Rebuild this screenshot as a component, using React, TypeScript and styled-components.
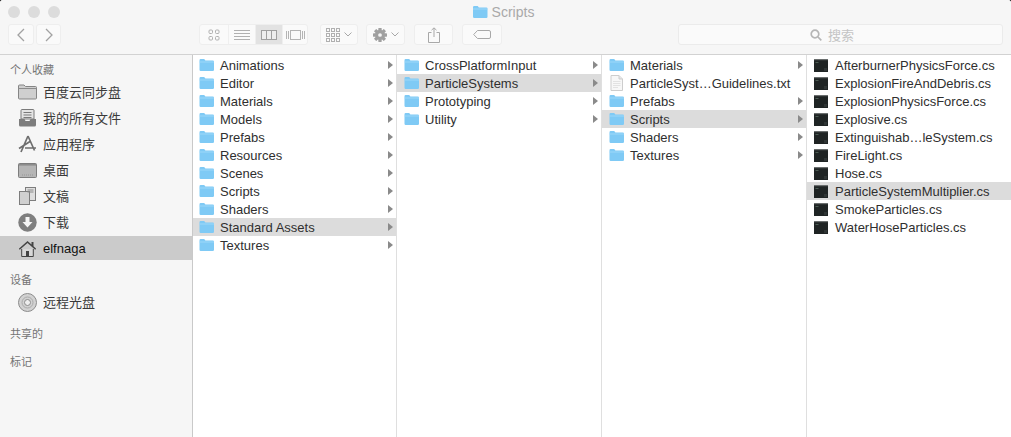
import React from "react";
import styled, { createGlobalStyle } from "styled-components";

const Global = createGlobalStyle`
  *, *::before, *::after { box-sizing: border-box; }
  html, body { margin: 0; padding: 0; height: 100%; background: #111; overflow: hidden; }
  #root { height: 100%; }
`;

const Win = styled.div`
  height: 437px;
  width: 1011px;
  display: flex;
  flex-direction: column;
  background: #fff;
  border-radius: 3px 3px 0 0;
  overflow: hidden;
  font-family: "Liberation Sans", "Noto Sans CJK SC", sans-serif;
`;
const Toolbar = styled.header`
  height: 55px;
  flex: none;
  background: #f6f6f6;
  border-bottom: 1px solid #d2d2d2;
  display: flex;
  flex-direction: column;
`;
const TitleRow = styled.div`
  height: 23px;
  margin-bottom: 1px;
  padding: 0 13px 0 8px;
  display: grid;
  grid-template-columns: 1fr auto 1fr;
  align-items: center;
`;
const Lights = styled.div`
  display: flex;
  gap: 8px;
`;
const Light = styled.span`
  width: 12px;
  height: 12px;
  border-radius: 50%;
  background: #dcdcdc;
`;
const Title = styled.div`
  display: flex;
  align-items: center;
  gap: 4px;
  font-size: 14px;
  color: #a9a9a9;
`;
const Tools = styled.div`
  height: 21px;
  padding: 0 8px;
  display: flex;
  align-items: stretch;
`;
const Group = styled.div<{ $left?: number }>`
  display: flex;
  margin-left: ${(p) => p.$left ?? 0}px;
  background: #fafafa;
  border: 1px solid #eeeeee;
  border-radius: 3px;
`;
const Tool = styled.div<{ $w: number; $on?: boolean }>`
  width: ${(p) => p.$w}px;
  display: flex;
  align-items: center;
  justify-content: center;
  gap: 4px;
  background: ${(p) => (p.$on ? "#e2e2e2" : "transparent")};
  & + & { border-left: 1px solid #efefef; }
`;
const Search = styled.div`
  width: 325px;
  margin-left: auto;
  padding-right: 17px;
  background: #fafafa;
  border: 1px solid #ebebeb;
  border-radius: 3px;
  display: flex;
  align-items: center;
  justify-content: center;
  gap: 6px;
  color: #c4c4c4;
  font-size: 13px;
`;
const Body = styled.div`
  flex: 1;
  min-height: 0;
  display: flex;
`;
const Sidebar = styled.nav`
  width: 193px;
  flex: none;
  background: #f6f6f6;
  border-right: 1px solid #c9c9c9;
`;
const Heading = styled.div<{ $first?: boolean }>`
  line-height: 14px;
  padding: ${(p) => (p.$first ? "8px 0 3px 10px" : "11px 0 3px 10px")};
  font-size: 11px;
  color: #747474;
`;
const Place = styled.div<{ $on?: boolean }>`
  height: 24px;
  margin-bottom: 2px;
  padding-left: 18px;
  display: flex;
  align-items: center;
  gap: 6px;
  font-size: 13px;
  color: ${(p) => (p.$on ? "#111" : "#3a3a3a")};
  background: ${(p) => (p.$on ? "#cbcbcb" : "transparent")};
`;
const PlaceLabel = styled.span`
  margin-bottom: 2px;
`;
const Columns = styled.main`
  flex: 1;
  display: grid;
  grid-template-columns: 204px 205px 205px 1fr;
`;
const Column = styled.section`
  padding-top: 1px;
  border-right: 1px solid #dfdfdf;
  &:last-child { border-right: 0; }
`;
const Row = styled.div<{ $on?: boolean; $inset: number }>`
  height: 18px;
  padding-left: ${(p) => p.$inset}px;
  padding-right: 3px;
  display: flex;
  align-items: center;
  gap: 6px;
  font-size: 13px;
  color: #2f2f2f;
  white-space: nowrap;
  background: ${(p) => (p.$on ? "#dcdcdc" : "transparent")};
`;
const Name = styled.span`
  flex: 1;
`;

const Folder = ({ w = 15, h = 12 }: { w?: number; h?: number }) => (
  <svg width={w} height={h} viewBox="0 0 15 12">
    <path d="M0.5 1.2Q0.5 0 1.7 0H5.2L6.4 1.4H13.8Q15 1.4 15 2.6V10.8Q15 12 13.8 12H1.7Q0.5 12 0.5 10.8Z" fill="#7fcaf5" />
    <rect x="0.5" y="2.6" width="14.5" height="0.8" fill="#a6dcf9" />
  </svg>
);
const Code = () => (
  <svg width="15" height="13" viewBox="0 0 15 13">
    <rect width="14" height="13" fill="#1f2424" />
    <rect width="14" height="1.2" fill="#6a6e6e" />
    <rect x="1.5" y="3" width="3" height="1" fill="#4c5c54" />
    <rect x="10" y="9" width="3" height="3" fill="#2f3535" />
  </svg>
);
const Doc = () => (
  <svg width="15" height="16" viewBox="0 0 15 16">
    <path d="M2 .5H10L13.5 4V15.5H2Z" fill="#f7f7f7" stroke="#cdcdcd" />
    <path d="M10 .5V4H13.5" fill="#e6e6e6" stroke="#cdcdcd" />
    <path d="M4 6.5H11.5M4 8.5H11.5M4 10.5H11.5M4 12.5H9" stroke="#e2e2e2" />
  </svg>
);
const Arrow = () => (
  <svg width="5" height="8" viewBox="0 0 5 8">
    <path d="M0 0L5 4L0 8Z" fill="#8a8a8a" />
  </svg>
);

const Line = "#8c8c8c";
const ChevronL = () => (
  <svg width="10" height="14" viewBox="0 0 10 14"><path d="M8 1L2 7L8 13" fill="none" stroke="#a2a2a2" strokeWidth="1.3" /></svg>
);
const ChevronR = () => (
  <svg width="10" height="14" viewBox="0 0 10 14"><path d="M2 1L8 7L2 13" fill="none" stroke="#a2a2a2" strokeWidth="1.3" /></svg>
);
const IconGrid = () => (
  <svg width="12" height="12" viewBox="0 0 12 12" fill="none" stroke="#b0b0b0">
    <rect x="1" y="1" width="3.5" height="3.5" rx="1" /><rect x="7.5" y="1" width="3.5" height="3.5" rx="1" />
    <rect x="1" y="7.5" width="3.5" height="3.5" rx="1" /><rect x="7.5" y="7.5" width="3.5" height="3.5" rx="1" />
  </svg>
);
const IconList = () => (
  <svg width="16" height="12" viewBox="0 0 16 12" stroke="#b0b0b0"><path d="M0 1.5H16M0 4.5H16M0 7.5H16M0 10.5H16" /></svg>
);
const IconCols = () => (
  <svg width="16" height="10" viewBox="0 0 16 10" fill="#eeeeee" stroke="#a0a0a0"><rect x=".5" y=".5" width="15" height="9" /><path d="M5.5 .5V9.5M10.5 .5V9.5" /></svg>
);
const IconFlow = () => (
  <svg width="19" height="10" viewBox="0 0 19 10" fill="none" stroke="#b4b4b4"><rect x="4.5" y=".5" width="10" height="9" /><path d="M.5 1V9M2.5 1V9M16.5 1V9M18.5 1V9" /></svg>
);
const IconArrange = () => (
  <svg width="14" height="14" viewBox="0 0 14 14" fill="none" stroke="#b0b0b0">
    {[0.5, 5.5, 10.5].map((x) => [0.5, 5.5, 10.5].map((y) => <rect key={`${x}-${y}`} x={x} y={y} width="3" height="3" />))}
  </svg>
);
const Caret = () => (
  <svg width="8" height="5" viewBox="0 0 8 5"><path d="M.5 .5L4 4L7.5 .5" fill="none" stroke="#a8a8a8" /></svg>
);
const Gear = () => (
  <svg width="14" height="14" viewBox="0 0 15 15">
    <g fill="#a0a0a0">
      {[0, 45, 90, 135].map((a) => <rect key={a} x="5.7" y="0" width="3.6" height="15" rx=".5" transform={`rotate(${a} 7.5 7.5)`} />)}
      <circle cx="7.5" cy="7.5" r="5.3" />
    </g>
    <circle cx="7.5" cy="7.5" r="2" fill="#f4f4f4" />
  </svg>
);
const Share = () => (
  <svg width="12" height="16" viewBox="0 0 12 16" fill="none" stroke="#a8a8a8">
    <path d="M3.5 5.5H.5V15.5H11.5V5.5H8.5M6 10V1M3.5 3.2L6 .8L8.5 3.2" />
  </svg>
);
const Tag = () => (
  <svg width="18" height="9" viewBox="0 0 18 9" fill="none" stroke="#a8a8a8">
    <path d="M4.5 .5H16Q17.5 .5 17.5 2V7Q17.5 8.5 16 8.5H4.5L.7 4.5Z" />
  </svg>
);
const Magnifier = () => (
  <svg width="12" height="12" viewBox="0 0 12 12" fill="none" stroke="#b5b5b5" strokeWidth="1.7">
    <circle cx="5" cy="5" r="3.8" /><path d="M8 8L11.3 11.3" />
  </svg>
);

const SideFolder = () => (
  <svg width="19" height="16" viewBox="0 0 19 16">
    <path d="M.5 2Q.5 1 1.5 1H6L7.5 2.5H17.5Q18.5 2.5 18.5 3.5V14Q18.5 15 17.5 15H1.5Q.5 15 .5 14Z" fill="#cfcfcf" stroke="#858585" />
    <path d="M.5 4.5H18.5" stroke={Line} />
  </svg>
);
const SideAll = () => (
  <svg width="19" height="18" viewBox="0 0 19 18">
    <path d="M3 1.5Q3 .5 4 .5H15Q16 .5 16 1.5V10H3Z" fill="#e4e4e4" stroke="#7a7a7a" />
    <path d="M5.5 3.5H13.5M5.5 6H13.5M5.5 8.5H13.5" stroke="#7a7a7a" />
    <path d="M1 10H6.5L7.5 12H11.5L12.5 10H18V16Q18 17.5 16.5 17.5H2.5Q1 17.5 1 16Z" fill="#7d7d7d" />
  </svg>
);
const SideApps = () => (
  <svg width="19" height="18" viewBox="0 0 19 18" fill="none" stroke="#6f6f6f" strokeWidth="1.7">
    <path d="M10 1L3 17M10 1L16.5 15.5M1 13.5L12 6.5M7 13H18" />
  </svg>
);
const SideDesk = () => (
  <svg width="19" height="15" viewBox="0 0 19 15">
    <rect x=".5" y=".5" width="18" height="14" rx="1" fill="#b5b5b5" stroke="#7d7d7d" />
    <rect x="1" y="1" width="17" height="1.6" fill="#8c8c8c" />
    <path d="M4 12H15" stroke="#959595" strokeDasharray="1 1" />
  </svg>
);
const SideDocs = () => (
  <svg width="19" height="18" viewBox="0 0 19 18">
    <rect x="7.5" y=".5" width="10" height="13" fill="#dedede" stroke="#7d7d7d" />
    <rect x="1.5" y="4.5" width="10" height="13" fill="#d0d0d0" stroke="#7d7d7d" />
    <path d="M9.5 3H15.5M9.5 5H15.5" stroke="#8a8a8a" />
  </svg>
);
const SideDown = () => (
  <svg width="19" height="19" viewBox="0 0 19 19">
    <circle cx="9.5" cy="9.5" r="9.2" fill="#7f7f7f" />
    <path d="M7.5 4H11.5V9H14.5L9.5 14.5L4.5 9H7.5Z" fill="#f6f6f6" />
  </svg>
);
const SideHome = () => (
  <svg width="19" height="17" viewBox="0 0 19 17">
    <path d="M9.5 1L.8 8.8L1.8 9.8L9.5 3L17.2 9.8L18.2 8.8L15.5 6.3V2H13.5V4.5Z" fill="#444" />
    <path d="M3.7 9V16.5H15.3V9" fill="#d8d8d8" stroke="#444" />
    <rect x="8" y="11" width="3" height="5.5" fill="#444" />
  </svg>
);
const SideDisc = () => (
  <svg width="19" height="19" viewBox="0 0 19 19" fill="none">
    <circle cx="9.5" cy="9.5" r="9" fill="#d2d2d2" stroke="#8c8c8c" />
    <circle cx="9.5" cy="9.5" r="5.5" stroke="#aaa" />
    <circle cx="9.5" cy="9.5" r="3" fill="#eee" stroke="#8c8c8c" />
  </svg>
);

type Item = { name: string; kind?: "doc" | "code"; on?: boolean; leaf?: boolean };

const columns: { inset: number; items: Item[] }[] = [
  {
    inset: 6,
    items: [
      { name: "Animations" }, { name: "Editor" }, { name: "Materials" }, { name: "Models" }, { name: "Prefabs" },
      { name: "Resources" }, { name: "Scenes" }, { name: "Scripts" }, { name: "Shaders" },
      { name: "Standard Assets", on: true }, { name: "Textures" },
    ],
  },
  {
    inset: 7,
    items: [{ name: "CrossPlatformInput" }, { name: "ParticleSystems", on: true }, { name: "Prototyping" }, { name: "Utility" }],
  },
  {
    inset: 7,
    items: [
      { name: "Materials" }, { name: "ParticleSyst…Guidelines.txt", kind: "doc", leaf: true }, { name: "Prefabs" },
      { name: "Scripts", on: true }, { name: "Shaders" }, { name: "Textures" },
    ],
  },
  {
    inset: 7,
    items: [
      "AfterburnerPhysicsForce.cs", "ExplosionFireAndDebris.cs", "ExplosionPhysicsForce.cs", "Explosive.cs",
      "Extinguishab…leSystem.cs", "FireLight.cs", "Hose.cs", "ParticleSystemMultiplier.cs", "SmokeParticles.cs", "WaterHoseParticles.cs",
    ].map((name) => ({ name, kind: "code" as const, leaf: true, on: name === "ParticleSystemMultiplier.cs" })),
  },
];

export default function App() {
  return (
    <Win>
      <Global />
      <Toolbar>
        <TitleRow>
          <Lights><Light /><Light /><Light /></Lights>
          <Title><Folder w={16} h={12} />Scripts</Title>
          <span />
        </TitleRow>
        <Tools>
          <Group><Tool $w={24}><ChevronL /></Tool></Group>
          <Group $left={2}><Tool $w={23}><ChevronR /></Tool></Group>
          <Group $left={138}>
            <Tool $w={28}><IconGrid /></Tool>
            <Tool $w={27}><IconList /></Tool>
            <Tool $w={27} $on><IconCols /></Tool>
            <Tool $w={25}><IconFlow /></Tool>
          </Group>
          <Group $left={12}><Tool $w={36}><IconArrange /><Caret /></Tool></Group>
          <Group $left={8}><Tool $w={37}><Gear /><Caret /></Tool></Group>
          <Group $left={9}><Tool $w={37}><Share /></Tool></Group>
          <Group $left={9}><Tool $w={38}><Tag /></Tool></Group>
          <Search><Magnifier />搜索</Search>
        </Tools>
      </Toolbar>
      <Body>
        <Sidebar>
          <Heading $first>个人收藏</Heading>
          <Place><SideFolder /><PlaceLabel>百度云同步盘</PlaceLabel></Place>
          <Place><SideAll /><PlaceLabel>我的所有文件</PlaceLabel></Place>
          <Place><SideApps /><PlaceLabel>应用程序</PlaceLabel></Place>
          <Place><SideDesk /><PlaceLabel>桌面</PlaceLabel></Place>
          <Place><SideDocs /><PlaceLabel>文稿</PlaceLabel></Place>
          <Place><SideDown /><PlaceLabel>下载</PlaceLabel></Place>
          <Place $on><SideHome />elfnaga</Place>
          <Heading>设备</Heading>
          <Place><SideDisc /><PlaceLabel>远程光盘</PlaceLabel></Place>
          <Heading>共享的</Heading>
          <Heading>标记</Heading>
        </Sidebar>
        <Columns>
          {columns.map((c, i) => (
            <Column key={i}>
              {c.items.map((it) => (
                <Row key={it.name} $on={it.on} $inset={c.inset}>
                  {it.kind === "doc" ? <Doc /> : it.kind === "code" ? <Code /> : <Folder />}
                  <Name>{it.name}</Name>
                  {!it.leaf && <Arrow />}
                </Row>
              ))}
            </Column>
          ))}
        </Columns>
      </Body>
    </Win>
  );
}
